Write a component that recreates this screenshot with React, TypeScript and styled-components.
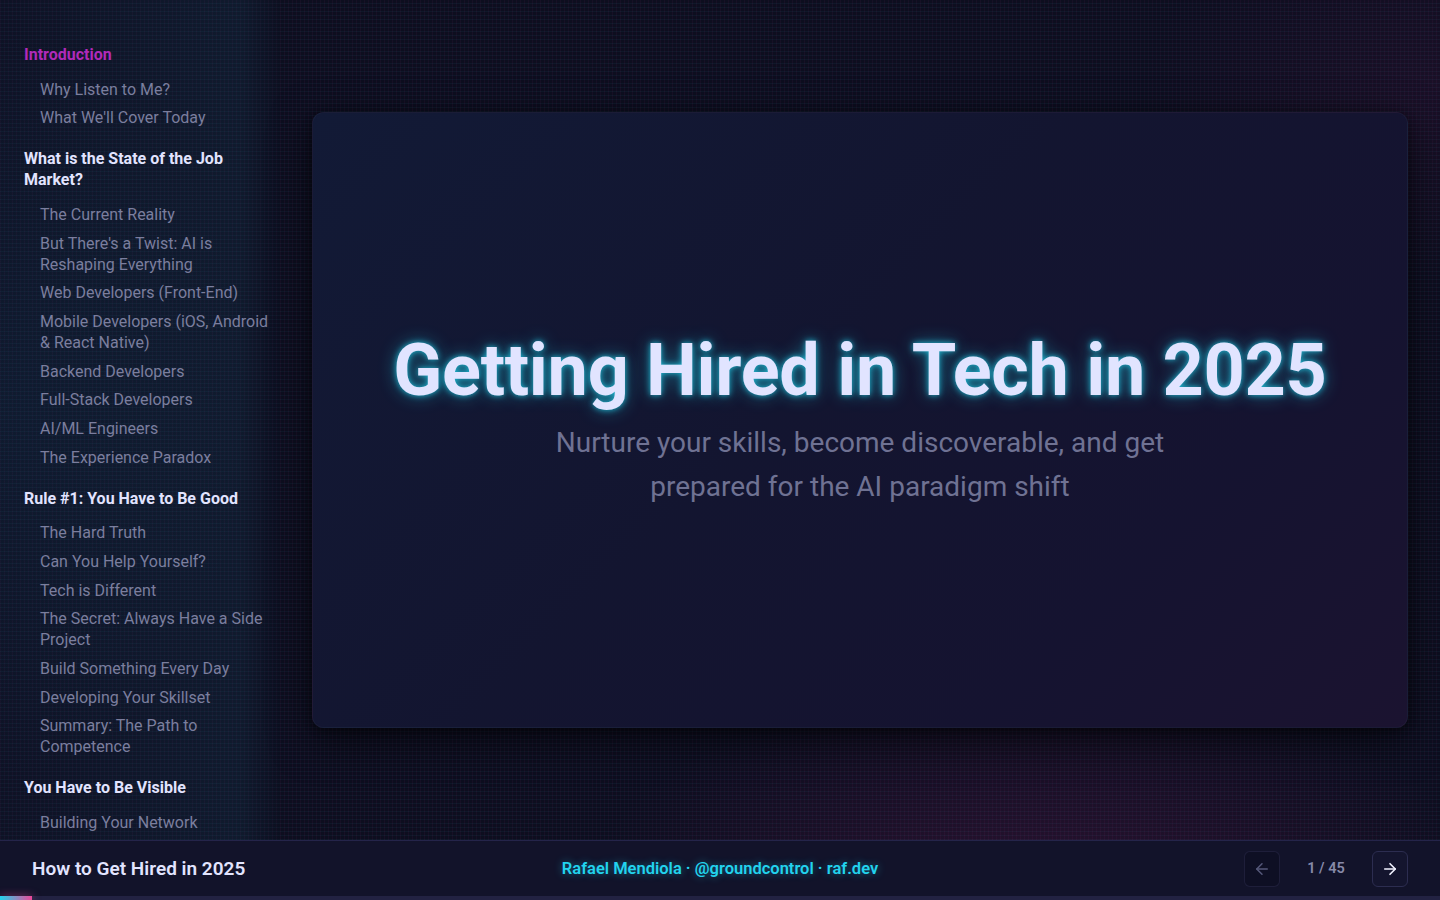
import React from "react";
import styled, { createGlobalStyle } from "styled-components";
import { ArrowLeft, ArrowRight } from "lucide-react";

const Global = createGlobalStyle`
  html, body { margin: 0; padding: 0; height: 100%; }
  body {
    background-color: #0d0e1f;
    font-family: Roboto, "Noto Sans", Arial, sans-serif;
    color: #e0e4ff;
    overflow: hidden;
  }
  * { box-sizing: border-box; }
`;

const Shell = styled.div`
  position: relative;
  height: 100vh;
  display: grid;
  grid-template-rows: 1fr 56px 4px;
  background-color: #0d0e1f;
  background-image:
    radial-gradient(ellipse 45% 35% at 72% 100%, rgba(190, 40, 140, 0.16), transparent 70%),
    radial-gradient(ellipse 30% 30% at 100% 10%, rgba(190, 40, 140, 0.07), transparent 70%),
    radial-gradient(ellipse 25% 60% at 0% 45%, rgba(30, 150, 190, 0.08), transparent 70%),
    repeating-linear-gradient(0deg, rgba(60, 190, 230, 0.05) 0 1px, transparent 1px 4px),
    repeating-linear-gradient(90deg, rgba(210, 60, 160, 0.05) 0 1px, transparent 1px 4px);
`;

const Body = styled.div`
  display: grid;
  grid-template-columns: 280px 1fr;
  min-height: 0;
`;

const Sidebar = styled.nav`
  overflow: hidden;
  padding: 44px 8px 0 24px;
  background: linear-gradient(90deg, rgba(20, 40, 70, 0.15) 0%, rgba(30, 90, 120, 0.16) 85%, rgba(10, 20, 35, 0.2) 100%);
  display: flex;
  flex-direction: column;
  gap: 16px;
`;

const Section = styled.div`
  display: flex;
  flex-direction: column;
`;

const SectionTitle = styled.div<{ $active?: boolean }>`
  font-size: 16px;
  line-height: 21px;
  font-weight: 700;
  color: ${(p) => (p.$active ? "#b02ab9" : "#e2e4ff")};
  margin-bottom: 10px;
  padding-right: 20px;
`;

const Item = styled.div`
  font-size: 16px;
  line-height: 21px;
  padding: 3.83px 0 3.83px 16px;
  color: #7b7e9e;
`;

const Main = styled.main`
  display: flex;
  align-items: center;
  justify-content: center;
  padding: 32px;
`;

const Card = styled.section`
  width: 1096px;
  aspect-ratio: 16 / 9;
  border-radius: 12px;
  background: linear-gradient(135deg, #121a36 0%, #131530 45%, #151330 75%, #1b1330 100%);
  border: 1px solid rgba(255, 255, 255, 0.03);
  box-shadow: 0 12px 40px rgba(0, 0, 0, 0.55), 0 2px 8px rgba(0, 0, 0, 0.4);
  display: flex;
  flex-direction: column;
  align-items: center;
  justify-content: center;
  text-align: center;
  padding: 0 60px;
`;

const Title = styled.h1`
  margin: 0;
  font-size: 72px;
  line-height: 1.1;
  font-weight: 700;
  color: #e1e4ff;
  letter-spacing: -0.3px;
  text-shadow: 0 0 6px rgba(34, 211, 238, 0.85), 0 0 18px rgba(34, 211, 238, 0.45);
`;

const Subtitle = styled.p`
  margin: 11px 0 0;
  max-width: 660px;
  font-size: 28px;
  line-height: 44px;
  font-weight: 400;
  color: #6f7293;
`;

const Footer = styled.footer`
  display: grid;
  grid-template-columns: 1fr auto 1fr;
  align-items: center;
  padding: 0 32px;
  background: #12132a;
  border-top: 1px solid #24244a;
`;

const DeckTitle = styled.div`
  font-size: 19px;
  font-weight: 600;
  color: #e2e4ff;
`;

const Credit = styled.div`
  font-size: 16.5px;
  font-weight: 600;
  color: #22d3ee;
  text-shadow: 0 0 8px rgba(34, 211, 238, 0.45);
`;

const Nav = styled.div`
  justify-self: end;
  display: flex;
  align-items: center;
  gap: 12px;
`;

const NavButton = styled.button<{ $disabled?: boolean }>`
  width: 36px;
  height: 36px;
  display: flex;
  align-items: center;
  justify-content: center;
  border-radius: 6px;
  padding: 0;
  cursor: pointer;
  background: ${(p) => (p.$disabled ? "rgba(10, 10, 28, 0.4)" : "#14152e")};
  border: 1px solid ${(p) => (p.$disabled ? "rgba(60, 60, 100, 0.35)" : "#2c2d50")};
  color: ${(p) => (p.$disabled ? "#55587a" : "#f1f2ff")};
`;

const Counter = styled.div`
  width: 68px;
  text-align: center;
  font-size: 14.5px;
  font-weight: 600;
  color: #878aa9;
`;

const Track = styled.div`
  background: #222242;
  display: flex;
`;

const Fill = styled.div`
  height: 4px;
  background: linear-gradient(90deg, #22d3ee, #ec4899);
  box-shadow: 0 0 8px rgba(236, 72, 153, 0.6);
`;

type Sec = { title: string; active?: boolean; items: string[] };

const sections: Sec[] = [
  { title: "Introduction", active: true, items: ["Why Listen to Me?", "What We'll Cover Today"] },
  {
    title: "What is the State of the Job Market?",
    items: [
      "The Current Reality",
      "But There's a Twist: AI is Reshaping Everything",
      "Web Developers (Front-End)",
      "Mobile Developers (iOS, Android & React Native)",
      "Backend Developers",
      "Full-Stack Developers",
      "AI/ML Engineers",
      "The Experience Paradox",
    ],
  },
  {
    title: "Rule #1: You Have to Be Good",
    items: [
      "The Hard Truth",
      "Can You Help Yourself?",
      "Tech is Different",
      "The Secret: Always Have a Side Project",
      "Build Something Every Day",
      "Developing Your Skillset",
      "Summary: The Path to Competence",
    ],
  },
  {
    title: "You Have to Be Visible",
    items: ["Building Your Network"],
  },
];

export default function App() {
  const current = 1;
  const total = 45;
  return (
    <>
      <Global />
      <Shell>
        <Body>
          <Sidebar>
            {sections.map((s) => (
              <Section key={s.title}>
                <SectionTitle $active={s.active}>{s.title}</SectionTitle>
                {s.items.map((it) => (
                  <Item key={it}>{it}</Item>
                ))}
              </Section>
            ))}
          </Sidebar>
          <Main>
            <Card>
              <Title>Getting Hired in Tech in 2025</Title>
              <Subtitle>
                Nurture your skills, become discoverable, and get prepared for the AI paradigm shift
              </Subtitle>
            </Card>
          </Main>
        </Body>
        <Footer>
          <DeckTitle>How to Get Hired in 2025</DeckTitle>
          <Credit>Rafael Mendiola · @groundcontrol · raf.dev</Credit>
          <Nav>
            <NavButton $disabled aria-label="Previous">
              <ArrowLeft size={18} strokeWidth={2} />
            </NavButton>
            <Counter>
              {current} / {total}
            </Counter>
            <NavButton aria-label="Next">
              <ArrowRight size={18} strokeWidth={2.2} />
            </NavButton>
          </Nav>
        </Footer>
        <Track>
          <Fill style={{ width: `${(current / total) * 100}%` }} />
        </Track>
      </Shell>
    </>
  );
}
